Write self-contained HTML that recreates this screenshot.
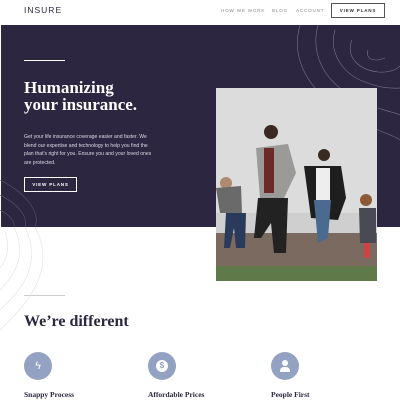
<!DOCTYPE html>
<html><head><style>
*{margin:0;padding:0;box-sizing:border-box}
body{width:400px;height:400px;overflow:hidden;background:#fff;font-family:"Liberation Sans",sans-serif;position:relative}
.abs{position:absolute}
.serif{font-family:"Liberation Serif",serif;font-weight:bold}
.nav{font-size:4.6px;letter-spacing:0.8px;color:#8a8a8a;top:8px}
</style></head><body>
<div class="abs" style="left:24px;top:5px;font-size:8.5px;letter-spacing:1px;color:#2c2640">INSURE</div>
<div class="abs nav" style="left:221px">HOW WE WORK</div>
<div class="abs nav" style="left:272px">BLOG</div>
<div class="abs nav" style="left:296px">ACCOUNT</div>
<div class="abs" style="left:331px;top:3px;width:54px;height:15px;border:1px solid #555;font-size:4.6px;letter-spacing:0.8px;color:#333;text-align:center;line-height:13px;font-weight:bold">VIEW PLANS</div>

<div class="abs" style="left:1px;top:25px;width:399px;height:202px;background:#2c2640"></div>
<svg class="abs" style="left:0;top:0" width="400" height="400" fill="none" stroke-width="0.6">
<g stroke="#77738e">
<path d="M300 25 C290 60 310 90 340 110 C370 130 395 135 400 140"/>
<path d="M318 25 C310 55 325 80 350 95 C375 110 395 112 400 115"/>
<path d="M335 30 C328 55 345 75 365 82 C385 90 398 88 400 88"/>
<path d="M352 40 C345 58 360 70 378 72 C392 73 398 68 400 66"/>
<path d="M368 50 C365 60 375 62 385 58"/>
</g>
<g stroke="#5a5672">
<path d="M0 180 C30 195 40 215 35 227"/>
<path d="M0 195 C20 205 28 218 25 227"/>
<path d="M0 210 C10 215 15 222 14 227"/>
</g>
<g stroke="#e2e2e6">
<path d="M35 227 C50 255 45 285 10 320 L0 330"/>
<path d="M25 227 C38 255 32 280 5 305 L0 310"/>
<path d="M14 227 C25 250 20 270 0 290"/>
<path d="M5 232 C10 245 8 258 0 268"/>
</g>
</svg>
<div class="abs" style="left:24px;top:60px;width:41px;height:1px;background:#fff"></div>
<div class="abs serif" style="left:24px;top:80px;font-size:17px;line-height:16.5px;color:#fff">Humanizing<br>your insurance.</div>
<div class="abs" style="left:24px;top:133px;width:132px;font-size:5.1px;line-height:8.5px;color:#dcdbe4">Get your life insurance coverage easier and faster. We blend our expertise and technology to help you find the plan that's right for you. Ensure you and your loved ones are protected.</div>
<div class="abs" style="left:24px;top:177px;width:53px;height:15px;border:1px solid #fff;font-size:4.6px;letter-spacing:0.8px;color:#fff;text-align:center;line-height:13px;font-weight:bold">VIEW PLANS</div>

<svg class="abs" style="left:216px;top:88px" width="161" height="193">
<rect width="161" height="193" fill="#dcdcdc"/>
<rect y="125" width="161" height="22" fill="#cfcfcf"/>
<rect y="145" width="161" height="36" fill="#7a6a60"/>
<rect y="178" width="161" height="15" fill="#5f7a48"/>
<circle cx="55" cy="44" r="7" fill="#3a2a22"/>
<path d="M40 60 L72 56 L80 85 L68 110 L44 110 Z" fill="#9a9a98"/>
<rect x="48" y="60" width="10" height="45" fill="#6a2a2a"/>
<path d="M42 110 L72 110 L70 165 L58 165 L55 135 L45 150 L38 150 Z" fill="#222"/>
<circle cx="108" cy="67" r="6" fill="#3a2a22"/>
<path d="M88 78 L125 78 L130 110 L122 132 L95 130 Z" fill="#1e1e1e"/>
<rect x="100" y="80" width="14" height="35" fill="#eee"/>
<path d="M98 112 L115 112 L112 150 L102 155 Z" fill="#4a6a90"/>
<circle cx="10" cy="95" r="6" fill="#b08a70"/>
<path d="M0 100 L25 98 L26 125 L4 125 Z" fill="#6a6a6a"/>
<path d="M10 125 L30 125 L29 160 L20 160 L18 140 L14 160 L8 160 Z" fill="#2a3a5a"/>
<circle cx="150" cy="112" r="6" fill="#8a5a3a"/>
<path d="M143 120 L160 120 L160 155 L144 155 Z" fill="#4a4a55"/>
<rect x="148" y="155" width="6" height="15" fill="#c44"/>
</svg>

<div class="abs" style="left:24px;top:295px;width:41px;height:1px;background:#ccc"></div>
<div class="abs serif" style="left:24px;top:313px;font-size:16px;color:#2c2640">We’re different</div>
<div class="abs" style="left:24px;top:352px;width:28px;height:28px;border-radius:50%;background:#93a1c2;color:#fff;font-size:11px;text-align:center;line-height:28px">ϟ</div>
<div class="abs" style="left:148px;top:352px;width:28px;height:28px;border-radius:50%;background:#93a1c2"><div style="margin:8px;width:12px;height:12px;border-radius:50%;background:#fff;color:#93a1c2;font-size:8px;text-align:center;line-height:12px;font-weight:bold">$</div></div>
<div class="abs" style="left:271px;top:352px;width:28px;height:28px;border-radius:50%;background:#93a1c2">
<div class="abs" style="left:11px;top:8px;width:6px;height:6px;border-radius:50%;background:#fff"></div>
<div class="abs" style="left:9px;top:15px;width:10px;height:5px;border-radius:4px 4px 0 0;background:#fff"></div></div>
<div class="abs serif" style="left:24px;top:390px;font-size:7.5px;color:#2c2640">Snappy Process</div>
<div class="abs serif" style="left:148px;top:390px;font-size:7.5px;color:#2c2640">Affordable Prices</div>
<div class="abs serif" style="left:271px;top:390px;font-size:7.5px;color:#2c2640">People First</div>
</body></html>
